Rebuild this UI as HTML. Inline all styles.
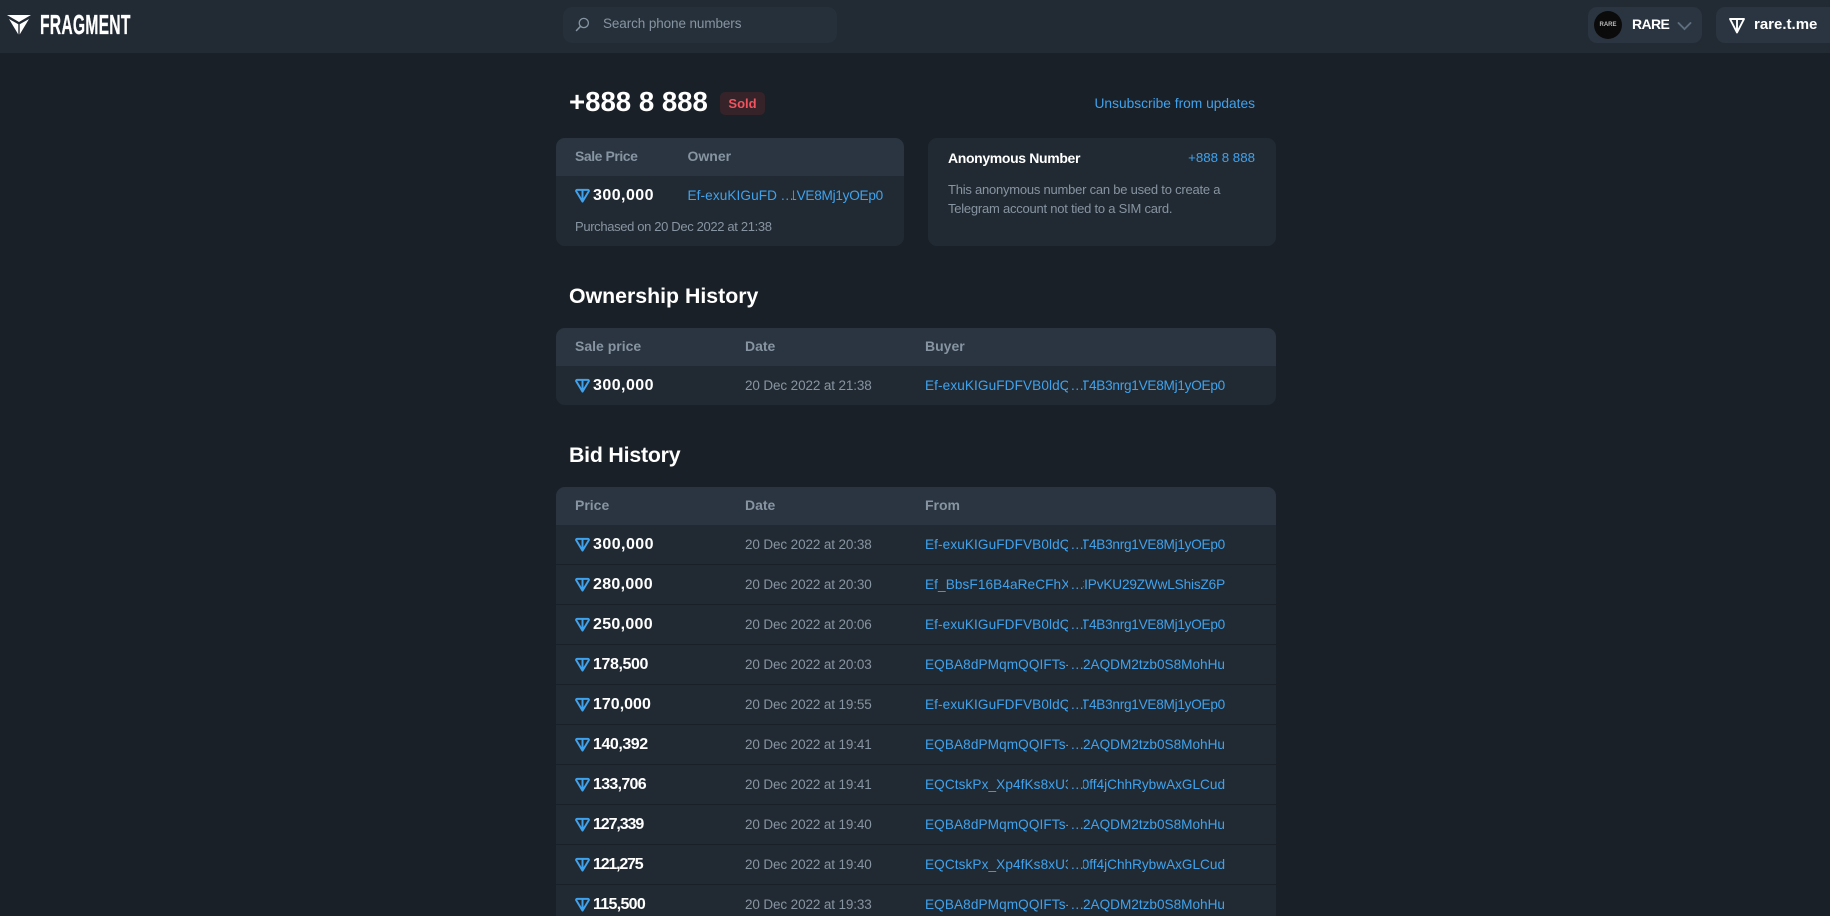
<!DOCTYPE html>
<html lang="en">
<head>
<meta charset="utf-8">
<title>+888 8 888 - Fragment</title>
<style>
html,body{margin:0;padding:0;width:1830px;height:916px;overflow:hidden;background:#1a2027;font-family:"Liberation Sans",sans-serif;color:#fff}
*{box-sizing:border-box}
#page{position:relative;width:1830px;height:916px;overflow:hidden;background:#1a2027}
.a{position:absolute;white-space:nowrap}
header{position:absolute;left:0;top:0;width:1830px;height:53px;background:#222a34}
.btn{position:absolute;top:7px;height:36px;background:#2a3541;border-radius:9px}
.card{position:absolute;background:#212a33;border-radius:9px;overflow:hidden}
.th{position:absolute;left:0;top:0;width:100%;height:38px;background:#2a3541}
.hd{position:absolute;top:0;line-height:37px;font-size:14px;font-weight:bold;color:#8794a1;white-space:nowrap}
.row{position:absolute;left:0;width:720px;height:40px;border-bottom:1px solid #1a2027}
.ton{position:absolute;left:19px;top:12px;width:15px;height:15px}
.pr{position:absolute;left:37px;top:0;line-height:39px;font-size:16px;font-weight:bold;white-space:nowrap}
.dt{position:absolute;left:189px;top:0;line-height:39px;font-size:13.5px;letter-spacing:-.12px;color:#8794a1;white-space:nowrap}
.l1,.l2,.el{position:absolute;top:0;line-height:39px;font-size:13.6px;color:#40a2ec;white-space:nowrap;overflow:hidden}
.l1{left:369px;width:143px;letter-spacing:.1px}
.el{left:515px;width:12px;letter-spacing:.6px}
.l2{left:527px;width:142px;direction:rtl;text-align:right}
.l2 span{direction:ltr;unicode-bidi:bidi-override}
.l2 .n{letter-spacing:-.25px}
.l2 .m{letter-spacing:-.15px}
h2{position:absolute;margin:0;left:569px;font-size:21.3px;line-height:28px;font-weight:bold;white-space:nowrap}
</style>
</head>
<body>
<div id="page">
<svg width="0" height="0" style="position:absolute"><defs>
<symbol id="t" viewBox="0 0 16 16"><path d="M2.200 2h11.600a1 1 0 0 1 .9 1.500L8 14.500 1.300 3.500A1 1 0 0 1 2.200 2zM8 2v12.500" fill="none" stroke="#40a2ec" stroke-width="2.100" stroke-linejoin="round"/></symbol>
</defs></svg>

<header>
  <svg class="a" style="left:6px;top:14px" width="26" height="21" viewBox="0 0 26 21"><path d="M1 1h24L13 8zM3 5 12.300 10.200V20.500zM23 5 13.700 10.200V20.500z" fill="#fff"/></svg>
  <div class="a" style="left:40px;top:11px;font-size:27.500px;line-height:28px;font-weight:bold;transform:scaleX(.57);transform-origin:0 0;letter-spacing:.4px;-webkit-text-stroke:.3px #fff">FRAGMENT</div>
  <div class="a" style="left:563px;top:7px;width:274px;height:36px;background:#25303a;border-radius:9px"></div>
  <svg class="a" style="left:575px;top:17px" width="15" height="15" viewBox="0 0 15 15"><circle cx="8.800" cy="6" r="4.600" fill="none" stroke="#8794a1" stroke-width="1.300"/><path d="M5.500 9.300 1.500 13.500" stroke="#8794a1" stroke-width="1.500" stroke-linecap="round"/></svg>
  <div class="a" style="left:603px;top:6px;line-height:36px;font-size:13.500px;letter-spacing:-.1px;color:#8794a1">Search phone numbers</div>
  <div class="btn" style="left:1588px;width:114px"></div>
  <div class="a" style="left:1594px;top:11px;width:28px;height:28px;border-radius:50%;background:#0b0b0c;color:#bbb;font-size:6px;line-height:28px;text-align:center;font-weight:bold">RARE</div>
  <div class="a" style="left:1632px;top:7px;line-height:35px;font-size:14px;letter-spacing:-.6px;font-weight:bold">RARE</div>
  <svg class="a" style="left:1677px;top:21px" width="15" height="10" viewBox="0 0 15 10"><path d="M1.500 2 7.500 8 13.500 2" fill="none" stroke="#5f6e7d" stroke-width="1.900" stroke-linecap="round"/></svg>
  <div class="btn" style="left:1716px;width:130px"></div>
  <svg class="a" style="left:1728px;top:17px" width="18" height="17" viewBox="0 0 18 17"><path d="M2 2h14L9 15.500zM9 2v13.500" fill="none" stroke="#fff" stroke-width="1.900" stroke-linejoin="round"/></svg>
  <div class="a" style="left:1754px;top:7px;line-height:36px;font-size:15px;font-weight:bold">rare.t.me</div>
</header>

<div class="a" style="left:569px;top:84px;font-size:27.600px;line-height:36px;font-weight:bold">+888 8 888</div>
<div class="a" style="left:720px;top:92px;width:45px;height:23px;border-radius:5px;background:#352329;color:#f2535f;font-size:13px;font-weight:bold;line-height:23px;text-align:center">Sold</div>
<div class="a" style="right:575px;top:94px;line-height:20px;font-size:13.750px;color:#40a2ec">Unsubscribe from updates</div>

<div class="card" style="left:556px;top:138px;width:348px;height:108px">
  <div class="th"></div>
  <div class="hd" style="left:19px;letter-spacing:-.45px">Sale Price</div>
  <div class="hd" style="left:131.500px">Owner</div>
  <svg class="ton" style="top:50px"><use href="#t"/></svg>
  <div class="pr" style="top:38px;letter-spacing:.45px">300,000</div>
  <div class="l1" style="left:131.500px;width:89px;top:38px">Ef-exuKIGuFDFVB0ldQ</div>
  <div class="el" style="left:225px;top:38px">...</div>
  <div class="l2" style="left:237px;width:90px;top:38px"><span class="n">T4B3nrg1VE8Mj1yOEp0</span></div>
  <div class="a" style="left:19px;top:79px;line-height:20px;font-size:13px;letter-spacing:-.35px;color:#8794a1">Purchased on 20 Dec 2022 at 21:38</div>
</div>

<div class="card" style="left:928px;top:138px;width:348px;height:108px">
  <div class="a" style="left:20px;top:10px;line-height:20px;font-size:14px;letter-spacing:-.35px;font-weight:bold">Anonymous Number</div>
  <div class="a" style="right:21px;top:10px;line-height:20px;font-size:13.300px;color:#40a2ec">+888 8 888</div>
  <div class="a" style="left:20px;top:42px;line-height:19.300px;font-size:13px;letter-spacing:-.23px;color:#8794a1">This anonymous number can be used to create a<br>Telegram account not tied to a SIM card.</div>
</div>

<h2 style="top:282px">Ownership History</h2>
<div class="card" style="left:556px;top:328px;width:720px;height:77px">
  <div class="th"></div>
  <div class="hd" style="left:19px">Sale price</div>
  <div class="hd" style="left:189px">Date</div>
  <div class="hd" style="left:369px">Buyer</div>
  <div class="row" style="top:38px;border:0">
    <svg class="ton"><use href="#t"/></svg><div class="pr" style="letter-spacing:.45px">300,000</div><div class="dt">20 Dec 2022 at 21:38</div>
    <div class="l1">Ef-exuKIGuFDFVB0ldQ</div><div class="el">...</div><div class="l2"><span class="n">T4B3nrg1VE8Mj1yOEp0</span></div>
  </div>
</div>

<h2 style="top:441px;letter-spacing:-.2px">Bid History</h2>
<div class="card" style="left:556px;top:487px;width:720px;height:429px;border-radius:9px 9px 0 0">
  <div class="th"></div>
  <div class="hd" style="left:19px">Price</div>
  <div class="hd" style="left:189px">Date</div>
  <div class="hd" style="left:369px">From</div>
  <div class="row" style="top:38px"><svg class="ton"><use href="#t"/></svg><div class="pr" style="letter-spacing:.45px">300,000</div><div class="dt">20 Dec 2022 at 20:38</div><div class="l1">Ef-exuKIGuFDFVB0ldQ</div><div class="el">...</div><div class="l2"><span class="n">T4B3nrg1VE8Mj1yOEp0</span></div></div>
  <div class="row" style="top:78px"><svg class="ton"><use href="#t"/></svg><div class="pr" style="letter-spacing:.3px">280,000</div><div class="dt">20 Dec 2022 at 20:30</div><div class="l1">Ef_BbsF16B4aReCFhXIQ</div><div class="el">...</div><div class="l2"><span class="m">CIPvKU29ZWwLShisZ6P</span></div></div>
  <div class="row" style="top:118px"><svg class="ton"><use href="#t"/></svg><div class="pr" style="letter-spacing:.3px">250,000</div><div class="dt">20 Dec 2022 at 20:06</div><div class="l1">Ef-exuKIGuFDFVB0ldQ</div><div class="el">...</div><div class="l2"><span class="n">T4B3nrg1VE8Mj1yOEp0</span></div></div>
  <div class="row" style="top:158px"><svg class="ton"><use href="#t"/></svg><div class="pr" style="letter-spacing:-.4px">178,500</div><div class="dt">20 Dec 2022 at 20:03</div><div class="l1">EQBA8dPMqmQQIFTs-</div><div class="el">...</div><div class="l2"><span>2AQDM2tzb0S8MohHu</span></div></div>
  <div class="row" style="top:198px"><svg class="ton"><use href="#t"/></svg><div class="pr">170,000</div><div class="dt">20 Dec 2022 at 19:55</div><div class="l1">Ef-exuKIGuFDFVB0ldQ</div><div class="el">...</div><div class="l2"><span class="n">T4B3nrg1VE8Mj1yOEp0</span></div></div>
  <div class="row" style="top:238px"><svg class="ton"><use href="#t"/></svg><div class="pr" style="letter-spacing:-.45px">140,392</div><div class="dt">20 Dec 2022 at 19:41</div><div class="l1">EQBA8dPMqmQQIFTs-</div><div class="el">...</div><div class="l2"><span>2AQDM2tzb0S8MohHu</span></div></div>
  <div class="row" style="top:278px"><svg class="ton"><use href="#t"/></svg><div class="pr" style="letter-spacing:-.7px">133,706</div><div class="dt">20 Dec 2022 at 19:41</div><div class="l1">EQCtskPx_Xp4fKs8xU3</div><div class="el">...</div><div class="l2"><span>0ff4jChhRybwAxGLCud</span></div></div>
  <div class="row" style="top:318px"><svg class="ton"><use href="#t"/></svg><div class="pr" style="letter-spacing:-1.1px">127,339</div><div class="dt">20 Dec 2022 at 19:40</div><div class="l1">EQBA8dPMqmQQIFTs-</div><div class="el">...</div><div class="l2"><span>2AQDM2tzb0S8MohHu</span></div></div>
  <div class="row" style="top:358px"><svg class="ton"><use href="#t"/></svg><div class="pr" style="letter-spacing:-1.2px">121,275</div><div class="dt">20 Dec 2022 at 19:40</div><div class="l1">EQCtskPx_Xp4fKs8xU3</div><div class="el">...</div><div class="l2"><span>0ff4jChhRybwAxGLCud</span></div></div>
  <div class="row" style="top:398px;border:0"><svg class="ton"><use href="#t"/></svg><div class="pr" style="letter-spacing:-.7px">115,500</div><div class="dt">20 Dec 2022 at 19:33</div><div class="l1">EQBA8dPMqmQQIFTs-</div><div class="el">...</div><div class="l2"><span>2AQDM2tzb0S8MohHu</span></div></div>
</div>
</div>
</body>
</html>
